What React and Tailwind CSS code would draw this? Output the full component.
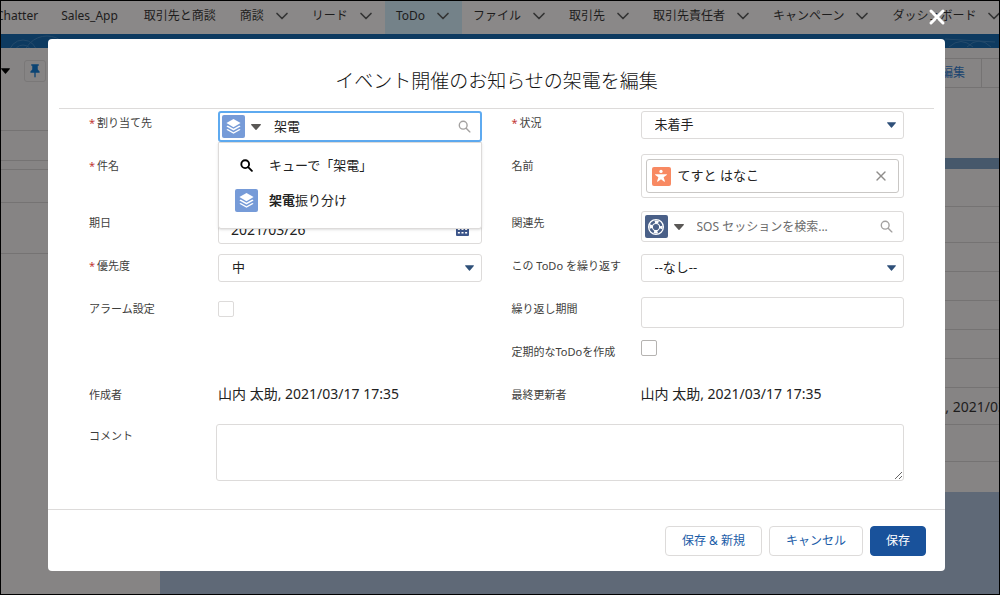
import React, { useState } from 'react';
import { ChevronDown, X } from 'lucide-react';

const navItems = [
  { label: 'Chatter' },
  { label: 'Sales_App' },
  { label: '取引先と商談' },
  { label: '商談', menu: true },
  { label: 'リード', menu: true },
  { label: 'ToDo', menu: true, active: true },
  { label: 'ファイル', menu: true },
  { label: '取引先', menu: true },
  { label: '取引先責任者', menu: true },
  { label: 'キャンペーン', menu: true },
  { label: 'ダッシュボード', menu: true },
];

const detailRows = ['h-[38px]', 'h-9', 'h-[29px]', 'h-[29px]', 'h-[29px]', 'h-[29px]', 'h-[29px]'];

const rowHeights = {
  short: 'min-h-[41px]',
  normal: 'min-h-[43px]',
  tall: 'min-h-[57px]',
};

const fieldClass = 'w-full rounded-[3px] border border-[#dddbda] bg-white text-[#222]';

const Caret = ({ className }) => (
  <svg viewBox="0 0 10 6" className={className} fill="currentColor" aria-hidden="true">
    <path d="M0.6 0h8.8c.5 0 .7.6.4.9L5.5 5.7c-.3.3-.7.3-1 0L.2.9C-.1.6.1 0 .6 0z" />
  </svg>
);

const SearchIcon = ({ className }) => (
  <svg viewBox="0 0 14 14" className={className} fill="none" stroke="currentColor" strokeLinecap="round" aria-hidden="true">
    <circle cx="5.6" cy="5.6" r="4.2" />
    <path d="m8.8 8.8 4 4" />
  </svg>
);

const QueueIcon = () => (
  <span className="flex size-[23px] shrink-0 items-center justify-center rounded-[2px] bg-[#769bd8] text-white">
    <svg viewBox="0 0 24 24" className="size-[17px]" fill="currentColor" aria-hidden="true">
      <path d="M12 1.5 22 7.2 12 12.9 2 7.2z" />
      <path d="M3.8 10.6 12 15.2l8.2-4.6 1.8 1.3-10 5.6-10-5.6z" />
      <path d="M3.8 15.4 12 20l8.2-4.6 1.8 1.3-10 5.7-10-5.7z" />
    </svg>
  </span>
);

const SosIcon = () => (
  <span className="flex size-[23px] shrink-0 items-center justify-center rounded-[2px] bg-[#4a6088] text-white">
    <svg viewBox="0 0 24 24" className="size-[18px]" fill="none" stroke="currentColor" aria-hidden="true">
      <circle cx="12" cy="12" r="9.8" strokeWidth="1.8" />
      <circle cx="12" cy="12" r="7" strokeWidth="3.4" strokeDasharray="5 6" strokeDashoffset="2.5" />
      <circle cx="12" cy="12" r="4.8" strokeWidth="1.4" />
    </svg>
  </span>
);

const ContactIcon = () => (
  <span className="flex size-[19px] shrink-0 items-center justify-center rounded-[2px] bg-[#f88962] text-white">
    <svg viewBox="0 0 24 24" className="size-[14px]" fill="currentColor" aria-hidden="true">
      <circle cx="12" cy="4.2" r="2.8" />
      <path d="M2.5 9h19c.7 0 .9.8.4 1.2l-5.4 4 2.2 7c.2.7-.5 1.1-1 .7L12 17.6l-5.7 4.3c-.5.4-1.2 0-1-.7l2.2-7-5.4-4C1.6 9.8 1.8 9 2.5 9z" />
    </svg>
  </span>
);

const CalendarIcon = () => (
  <svg viewBox="0 0 14 14" className="size-[13px]" fill="#3d568b" aria-hidden="true">
    <path d="M3 0h1.6v1.4h4.8V0H11v1.4h2c.6 0 1 .4 1 1V4H0V2.4c0-.6.4-1 1-1h2z" />
    <path d="M0 4.6h14V13c0 .6-.4 1-1 1H1c-.6 0-1-.4-1-1zm2 1.4v1.6h2.2V6zm3.9 0v1.6h2.2V6zm3.9 0v1.6H12V6zM2 9.6v1.6h2.2V9.6zm3.9 0v1.6h2.2V9.6zm3.9 0v1.6H12V9.6z" fillRule="evenodd" />
  </svg>
);

const Pin = () => (
  <svg viewBox="0 0 12 16" className="h-[14px] w-[10px]" fill="#0b4474" aria-hidden="true">
    <path d="M1.5 0h9v1.6H9.3v4.6l2.2 2.4v1.6H6.8V15L6 16l-.8-1v-4.8H.5V8.6l2.2-2.4V1.6H1.5z" />
  </svg>
);

const Row = ({ id, label, required, size = 'normal', children }) => (
  <div className={`flex items-start ${rowHeights[size]}`}>
    <label htmlFor={id} className="w-[129px] shrink-0 text-[11px] leading-6 whitespace-nowrap text-[#3e3e3c]">
      {required && <span className="mr-0.5 text-[#c23934]">*</span>}
      {label}
    </label>
    <div className="min-w-0 flex-1">{children}</div>
  </div>
);

const Select = ({ id, options }) => (
  <div className="relative">
    <select id={id} className={`${fieldClass} h-7 appearance-none pr-8 pl-[13px] text-[13px]`}>
      {options.map((o) => (
        <option key={o}>{o}</option>
      ))}
    </select>
    <Caret className="pointer-events-none absolute top-[11px] right-2 h-[6px] w-[9px] text-[#2f5079]" />
  </div>
);

const Background = () => (
  <>
    <header className="overflow-hidden bg-[#8a8888]">
      <nav className="-ml-[18px] flex h-[33px] items-stretch">
        {navItems.map((item) => (
          <a
            key={item.label}
            href="#"
            className={`flex shrink-0 items-center gap-2 pb-1 text-[12px] text-[#1d1c1c] first:pr-[10px] ${item.menu ? 'pr-[9px] pl-[11px]' : 'px-[13px]'} ${item.active ? 'bg-[#748289]' : ''}`}
          >
            {item.label}
            {item.menu && <ChevronDown className="size-5 text-[#333]" strokeWidth={2} />}
          </a>
        ))}
      </nav>
    </header>
    <svg className="h-[14px] w-full bg-[#0d3a60]" fill="none" stroke="#244a6b" aria-hidden="true">
      <circle cx="22" cy="20" r="14" />
      <circle cx="22" cy="20" r="9" />
      <circle cx="46" cy="26" r="24" />
      <path d="M948 13q12-11 24 0M966 13q12-12 24 0M944 5l50 3" />
    </svg>
    <div className="flex flex-1 bg-[#5f6977]">
      <aside className="flex w-[159px] flex-col bg-[#868484]">
        <div className="flex h-[83px] items-start border-b border-[#757373] pt-3">
          <Caret className="mt-2 h-[6px] w-[9px] text-black" />
          <button type="button" aria-label="ピン" className="ml-[14px] flex size-[22px] items-center justify-center rounded-[3px] border border-[#7a7878]">
            <Pin />
          </button>
        </div>
        <div className="h-[30px] border-b border-[#757373]" />
        <div className="h-[9px] border-b border-[#757373]" />
        <div className="h-[33px] border-b border-[#757373]" />
        <div className="h-[51px] border-b border-[#757373]" />
      </aside>
      <main className="flex-1">
        <div className="flex h-[110px] items-start justify-end bg-[#868484] pt-[10px]">
          <button type="button" className="h-[30px] border border-[#757373] px-4 text-[12px] text-[#1b4470]">編集</button>
          <span className="h-[30px] w-[17px] border-y border-[#757373]" />
        </div>
        <div className="h-[11px] bg-[#46586b]" />
        <div className="bg-[#868484]">
          {detailRows.map((h, i) => (
            <div key={i} className={`border-b border-[#757373] ${h}`} />
          ))}
          <div className="flex h-[37px] items-center justify-end overflow-hidden border-b border-[#757373]">
            <span className="-mr-[7px] text-[14px] text-[#1d1c1c]">, 2021/03</span>
          </div>
          <div className="h-[37px] border-b border-[#757373]" />
          <div className="h-[30px]" />
        </div>
      </main>
    </div>
  </>
);

const App = () => {
  const [assignee, setAssignee] = useState('架電');

  return (
    <div className="relative flex min-h-screen flex-col overflow-hidden border border-black font-['Noto_Sans','Noto_Sans_CJK_JP',sans-serif]">
      <Background />

      <div className="absolute inset-0 flex flex-col pr-[54px] pl-[47px]">
        <div className="flex h-[38px] shrink-0 items-start justify-end pt-1">
          <button type="button" aria-label="閉じる" className="-mr-1 text-white">
            <X className="size-6" strokeWidth={3} />
          </button>
        </div>

        <div role="dialog" aria-modal="true" aria-labelledby="dialog-title" className="rounded-[4px] bg-white">
          <h2 id="dialog-title" className="mx-[11px] border-b border-[#dddbda] pt-[29px] pb-[13px] text-center text-[19px] leading-[27px] font-light text-[#111]">
            イベント開催のお知らせの架電を編集
          </h2>

          <form id="todo-form" className="px-[41px] pt-0.5 pb-7" onSubmit={(e) => e.preventDefault()}>
            <div className="grid grid-cols-2 gap-x-[30px]">
              <Row id="assignee" label="割り当て先" required>
                <div className="relative">
                  <div className="flex h-[31px] items-center rounded-[3px] border-2 border-[#5eaaf0] bg-white px-0.5">
                    <QueueIcon />
                    <Caret className="ml-[6px] h-[6px] w-[10px] text-[#5a5856]" />
                    <input
                      id="assignee"
                      value={assignee}
                      onChange={(e) => setAssignee(e.target.value)}
                      className="ml-[13px] min-w-0 flex-1 text-[13px] text-[#222] outline-none"
                    />
                    <SearchIcon className="mr-[7px] size-[13px] stroke-[1.5] text-[#a3a1a0]" />
                  </div>
                  <ul className="absolute inset-x-0 top-[31px] z-10 h-[87px] rounded-b-[3px] border border-[#dddbda] bg-white pt-[5px] text-[13px] text-[#222] shadow-sm">
                    <li>
                      <button type="button" className="flex h-[35px] w-full items-center px-4">
                        <span className="mr-[11px] flex w-[23px] justify-center">
                          <SearchIcon className="size-[13px] stroke-2 text-black" />
                        </span>
                        キューで「架電」
                      </button>
                    </li>
                    <li>
                      <button type="button" className="flex h-[35px] w-full items-center px-4">
                        <span className="mr-[11px]"><QueueIcon /></span>
                        <b>架電</b>振り分け
                      </button>
                    </li>
                  </ul>
                </div>
              </Row>
              <Row id="status" label="状況" required>
                <Select id="status" options={['未着手', '進行中', '完了']} />
              </Row>

              <Row id="subject" label="件名" required size="tall">
                <input id="subject" className={`${fieldClass} h-[31px] px-3 text-[14px]`} />
              </Row>
              <Row id="name" label="名前" size="tall">
                <div className={`${fieldClass} p-1`}>
                  <div className="flex h-[34px] items-center rounded-[3px] border border-[#c9c7c5] px-[5px]">
                    <ContactIcon />
                    <input id="name" readOnly defaultValue="てすと はなこ" className="ml-[7px] min-w-0 flex-1 text-[13px] outline-none" />
                    <button type="button" aria-label="クリア" className="mr-1 text-[#8f8d8b]">
                      <X className="size-4" strokeWidth={2} />
                    </button>
                  </div>
                </div>
              </Row>

              <Row id="due" label="期日">
                <div className={`${fieldClass} flex h-[33px] items-center px-3 pt-1`}>
                  <input id="due" defaultValue="2021/03/26" className="min-w-0 flex-1 text-[14px] outline-none" />
                  <CalendarIcon />
                </div>
              </Row>
              <Row id="related" label="関連先">
                <div className={`${fieldClass} flex h-[31px] items-center px-[3px]`}>
                  <SosIcon />
                  <Caret className="ml-[6px] h-[6px] w-[10px] text-[#5a5856]" />
                  <input id="related" placeholder="SOS セッションを検索..." className="ml-[13px] min-w-0 flex-1 text-[12px] outline-none placeholder:text-[#6b6b6b]" />
                  <SearchIcon className="mr-[7px] size-[13px] stroke-[1.5] text-[#a3a1a0]" />
                </div>
              </Row>

              <Row id="priority" label="優先度" required>
                <Select id="priority" options={['中', '高', '低']} />
              </Row>
              <Row id="repeat" label="この ToDo を繰り返す">
                <Select id="repeat" options={['--なし--']} />
              </Row>

              <Row id="alarm" label="アラーム設定">
                <input id="alarm" type="checkbox" className="mt-1 block size-4 appearance-none rounded-[2px] border border-[#dddbda] bg-white" />
              </Row>
              <Row id="interval" label="繰り返し期間">
                <input id="interval" className={`${fieldClass} block h-[31px] px-3 text-[13px]`} />
              </Row>

              <div />
              <Row id="recurring" label="定期的なToDoを作成">
                <input id="recurring" type="checkbox" className="block size-4 appearance-none rounded-[2px] border border-[#b5b3b1] bg-white" />
              </Row>

              <Row label="作成者" size="short">
                <p className="text-[14px] leading-[22px] text-[#222]">山内 太助, 2021/03/17 17:35</p>
              </Row>
              <Row label="最終更新者" size="short">
                <p className="text-[14px] leading-[22px] text-[#222]">山内 太助, 2021/03/17 17:35</p>
              </Row>
            </div>

            <div className="flex items-start">
              <label htmlFor="comment" className="w-[127px] shrink-0 text-[11px] leading-6 text-[#3e3e3c]">コメント</label>
              <textarea id="comment" className={`${fieldClass} block h-[57px] min-w-0 flex-1 px-3 py-2 text-[13px]`} />
            </div>
          </form>

          <footer className="flex justify-end gap-[7px] border-t border-[#dddbda] pt-4 pr-[19px] pb-[15px] text-[12px]">
            <button type="submit" form="todo-form" className="h-[30px] rounded-[4px] border border-[#dddbda] px-4 text-[#1a5ca8]">保存 &amp; 新規</button>
            <button type="button" className="h-[30px] rounded-[4px] border border-[#dddbda] px-4 text-[#1a5ca8]">キャンセル</button>
            <button type="submit" form="todo-form" className="h-[30px] rounded-[4px] border border-[#19529b] bg-[#19529b] px-[15px] text-white">保存</button>
          </footer>
        </div>
      </div>
    </div>
  );
};

export default App;
